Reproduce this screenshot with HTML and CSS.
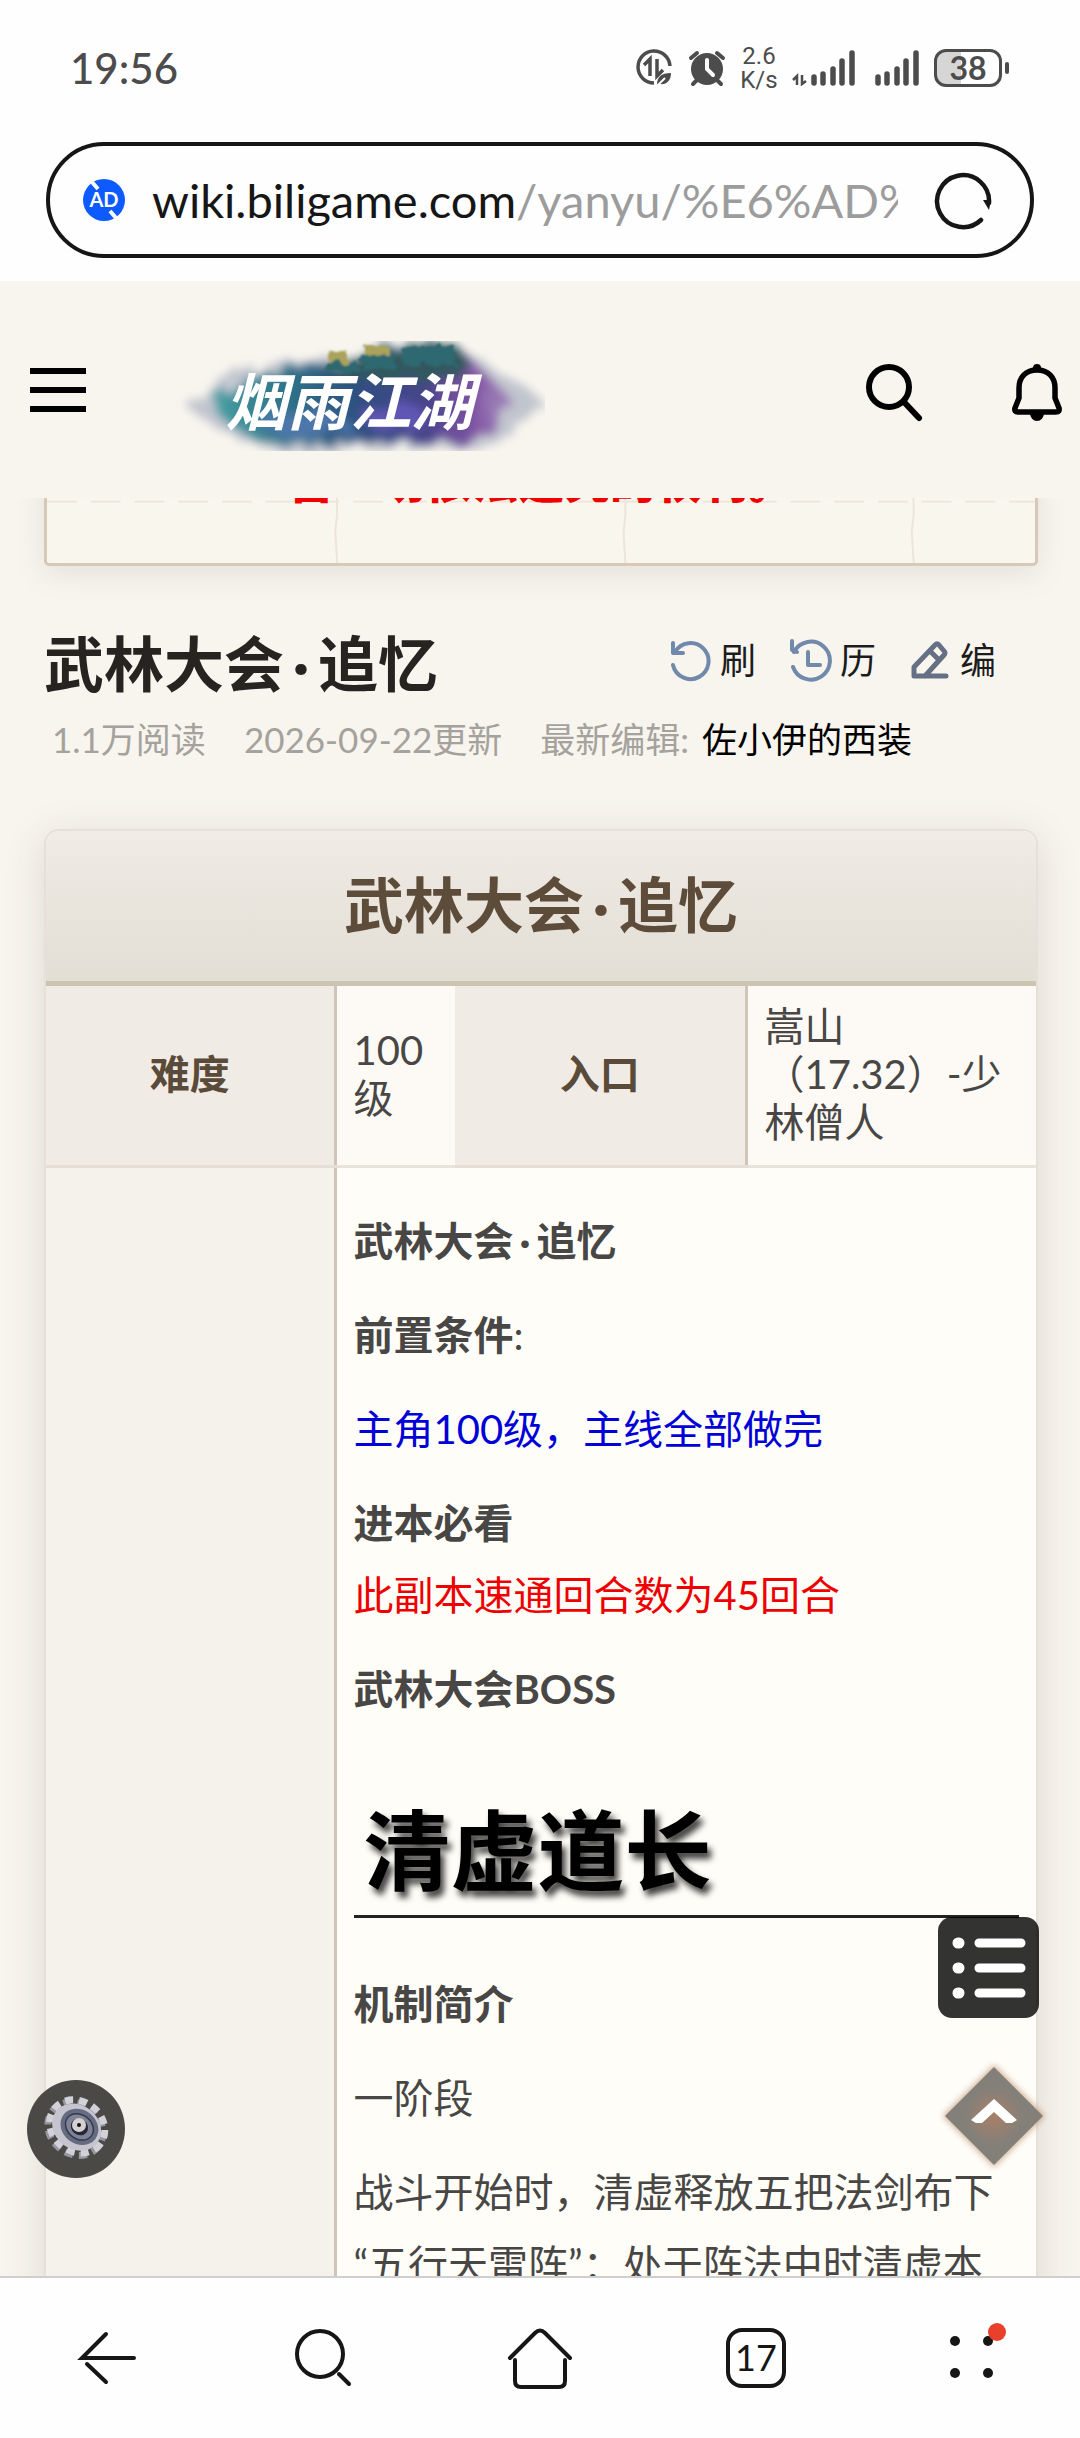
FILE: index.html
```html
<!DOCTYPE html>
<html lang="zh-CN">
<head>
<meta charset="utf-8">
<meta name="viewport" content="width=device-width, initial-scale=1">
<title>武林大会·追忆</title>
<link rel="stylesheet" href="styles.css">
</head>
<body>
<div class="status">
  <time class="clock">19:56</time>
  <div class="status-icons">
    <svg width="38" height="38" viewBox="0 0 38 38" aria-hidden="true">
      <path d="M18 34A16 16 0 1 1 34 17" fill="none" stroke="#4c4c4c" stroke-width="3.5"/>
      <path d="M8 16l6-6v17M27 21l-6 6V10" fill="none" stroke="#4c4c4c" stroke-width="3.5"/>
      <path d="M21 36c0-8 4-12 14-12 0 8-5 12-11 11z" fill="#4c4c4c"/>
      <path d="M21 37l8-8" stroke="#fff" stroke-width="2"/>
    </svg>
    <svg width="38" height="38" viewBox="0 0 38 38" aria-hidden="true">
      <circle cx="19" cy="20" r="16" fill="#4c4c4c"/>
      <path d="M3 9l6-5M35 9l-6-5M5 35l5-5M33 35l-5-5" stroke="#4c4c4c" stroke-width="4" stroke-linecap="round"/>
      <path d="M19 11v9l6 6" fill="none" stroke="#fff" stroke-width="4" stroke-linecap="round"/>
    </svg>
    <span class="speed"><span>2.6</span><span>K/s</span></span>
    <svg width="64" height="36" viewBox="0 0 64 36" aria-hidden="true">
      <path d="M1 30l4-4v9M14 31l-4 3V25" fill="none" stroke="#4c4c4c" stroke-width="2.5"/>
      <path d="M22 27v6M31 24v9M41 19v14M50 11v22M60 3v30" stroke="#4c4c4c" stroke-width="5.5" stroke-linecap="round"/>
    </svg>
    <svg width="50" height="36" viewBox="-4 0 50 36" aria-hidden="true">
      <path d="M4 27v6M13 24v9M23 19v14M32 11v22M42 3v30" stroke="#4c4c4c" stroke-width="5.5" stroke-linecap="round"/>
    </svg>
    <span class="battery">38</span>
  </div>
</div>

<div class="address">
  <svg width="44" height="44" viewBox="0 0 44 44" role="img" aria-label="AD">
    <circle cx="22" cy="22" r="21" fill="#0d5bff"/>
    <path d="M10 4l6 7M28 33l6 7" stroke="#fff" stroke-width="4"/>
    <text x="22" y="29" text-anchor="middle" class="ad-text">AD</text>
  </svg>
  <button class="url" type="button">wiki.biligame.com<span class="path">/yanyu/%E6%AD%</span></button>
  <button class="icon-btn" type="button" aria-label="刷新">
    <svg width="60" height="60" viewBox="0 0 60 60">
      <path d="M47 50A26 26 0 1 1 55 33" fill="none" stroke="#161616" stroke-width="4.5" stroke-linecap="round"/>
      <path d="M49 30h8l-2 10z" fill="#161616"/>
    </svg>
  </button>
</div>

<header class="site-head">
  <button class="icon-btn menu" type="button" aria-label="菜单"><i></i><i></i><i></i></button>
  <a class="logo" href="#">
    <svg width="370" height="110" viewBox="0 0 370 110" role="img" aria-label="烟雨江湖">
      <defs>
        <filter id="soft" x="-20%" y="-40%" width="140%" height="180%"><feTurbulence type="fractalNoise" baseFrequency=".05" numOctaves="3" seed="4"/><feDisplacementMap in="SourceGraphic" scale="26"/><feGaussianBlur stdDeviation="5"/></filter>
        <filter id="rough" x="-10%" y="-20%" width="120%" height="140%"><feTurbulence type="fractalNoise" baseFrequency=".09" numOctaves="2" seed="2"/><feDisplacementMap in="SourceGraphic" scale="12"/><feGaussianBlur stdDeviation="1"/></filter>
        <linearGradient id="ink" x1="0" x2="1" y1="0" y2="0">
          <stop offset="0" stop-color="#4aa3a6"/><stop offset=".25" stop-color="#2d7388"/><stop offset=".5" stop-color="#2f4f80"/><stop offset=".72" stop-color="#49438c"/><stop offset=".88" stop-color="#8356a4"/><stop offset="1" stop-color="#a48dbd"/>
        </linearGradient>
      </defs>
      <g filter="url(#soft)">
        <path d="M10 64Q60 22 140 20L215 8h70q40 20 80 50-20 40-60 50-140-2-200 4Q50 98 10 64z" fill="#a9b1c1" opacity=".7"/>
        <path d="M34 62Q70 28 150 26L220 4h60q24 22 56 54-14 34-50 44-130-2-190 0-40-10-62-40z" fill="url(#ink)"/>
        <ellipse cx="130" cy="84" rx="46" ry="12" fill="#4d77ab"/>
        <ellipse cx="220" cy="76" rx="32" ry="12" fill="#6157b4"/>
        <path d="M150 34q40-32 130-32l20 28q-60 20-150 4z" fill="#31585f"/>
      </g>
      <g filter="url(#rough)">
        <path d="M154 10h18v12h-18zM190 4h24v10h-24z" fill="#a9a35c"/>
        <path d="M150 22h34v8h-34zM186 14h34v14h-34zM228 4h52v20h-52z" fill="#2f6870"/>
      </g>
      <text x="50" y="84" class="logo-text">烟雨江湖</text>
    </svg>
  </a>
  <button class="icon-btn find" type="button" aria-label="搜索">
    <svg width="58" height="60" viewBox="0 0 58 60"><circle cx="23" cy="24" r="20" fill="none" stroke="#000" stroke-width="6"/><path d="M38 39l15 16" stroke="#000" stroke-width="6" stroke-linecap="round"/></svg>
  </button>
  <button class="icon-btn" type="button" aria-label="通知">
    <svg width="50" height="60" viewBox="0 0 50 60"><path d="M25 7C14 7 7 14 7 25v10L3 45q-1 4 3 4h38q4 0 3-4l-4-10V25C43 14 36 7 25 7z" fill="none" stroke="#000" stroke-width="5.5" stroke-linejoin="round"/><circle cx="25" cy="5" r="4"/><path d="M18 50h14a7 8 0 0 1-14 0z"/></svg>
  </button>
</header>

<main class="content">
  <section class="notice">
    <svg class="cracks" viewBox="0 0 994 106" preserveAspectRatio="none" aria-hidden="true">
      <path d="M0 41h994" stroke-dasharray="30 14"/>
      <path d="M291 0l1 54-2 18 2 34M581 0l1 54-2 20 2 32M871 0l1 54-2 20 2 32"/>
    </svg>
    <strong>留一切依法追究的权利。</strong>
  </section>

  <div class="title-row">
    <h1>武林大会<span class="dot">·</span>追忆</h1>
    <div class="tools">
      <button type="button">
        <svg width="42" height="44" viewBox="0 0 42 44"><path d="M3 27a18 18 0 1 0 2-13" class="line blue"/><path d="M3 5v10h10" class="line blue"/></svg>刷
      </button>
      <button type="button">
        <svg width="42" height="44" viewBox="0 0 42 44"><path d="M3 29a19 19 0 1 0 1-15" class="line blue"/><path d="M2 3v9l5 2M18 14v13h12" class="line blue"/></svg>历
      </button>
      <button type="button">
        <svg width="42" height="44" viewBox="0 0 42 44"><path d="M4 38V29L25 7q2-2 4 0l5 6q2 2 0 4L15 38M4 38h32M20 13l9 9" class="line slate"/></svg>编
      </button>
    </div>
  </div>
  <div class="meta">
    <span>1.1万阅读</span><span>2026-09-22更新</span><span>最新编辑: <a href="#">佐小伊的西装</a></span>
  </div>

  <article class="card">
    <h2>武林大会<span class="dot">·</span>追忆</h2>
    <table>
      <colgroup><col class="c1"><col class="c2"><col class="c3"><col></colgroup>
      <tr><th scope="row">难度</th><td>100级</td><th scope="row">入口</th><td>嵩山（17.32）-少林僧人</td></tr>
      <tr>
        <td class="side"></td>
        <td colspan="3" class="guide">
          <p><b>武林大会<span class="half">·</span>追忆</b></p>
          <p><b>前置条件</b>:</p>
          <p class="need">主角100级，主线全部做完</p>
          <p><b>进本必看</b><br><span class="warn">此副本速通回合数为45回合</span></p>
          <p><b>武林大会BOSS</b></p>
          <h3>清虚道长</h3>
          <p><b>机制简介</b></p>
          <p>一阶段</p>
          <p>战斗开始时，清虚释放五把法剑布下“五行天雷阵”：处于阵法中时清虚本</p>
        </td>
      </tr>
    </table>
  </article>

  <button class="float toc" type="button" aria-label="目录">
    <svg width="101" height="101" viewBox="0 0 101 101"><path d="M20 26h1M20 51h1M20 76h1" stroke="#fff" stroke-width="11" stroke-linecap="round"/><path d="M41 26h42M41 51h42M41 76h42" stroke="#fff" stroke-width="9" stroke-linecap="round"/></svg>
  </button>
  <button class="float top" type="button" aria-label="返回顶部">
    <svg width="120" height="120" viewBox="0 0 120 120">
      <defs><radialGradient id="glow"><stop offset="0" stop-color="#a87f67"/><stop offset=".6" stop-color="#83807a"/></radialGradient>
      <filter id="halo"><feGaussianBlur stdDeviation="3"/></filter></defs>
      <path d="M60 9l51 51-51 51L9 60z" fill="#c59878" filter="url(#halo)" opacity=".8"/>
      <path d="M60 11l49 49-49 49-49-49z" fill="url(#glow)"/>
      <path d="M60 43l23 21-5 3H72L60 56 48 67h-6l-5-3z" fill="#fff"/>
    </svg>
  </button>
  <button class="float gear" type="button" aria-label="设置">
    <svg width="98" height="98" viewBox="0 0 98 98">
      <circle cx="49" cy="49" r="49" fill="#4a4945"/>
      <g transform="rotate(38 49 48)">
        <ellipse cx="49" cy="49" rx="29" ry="25" fill="none" stroke="#9796a0" stroke-width="7" stroke-dasharray="8 6"/>
        <ellipse cx="49" cy="46" rx="29" ry="25" fill="none" stroke="#d2d0d8" stroke-width="7" stroke-dasharray="8 6"/>
        <ellipse cx="49" cy="47" rx="26" ry="22" fill="#c6c4cf"/>
        <ellipse cx="51" cy="45" rx="20" ry="17" fill="#656b80"/>
        <ellipse cx="51" cy="45" rx="15" ry="12" fill="#7e8398" stroke="#353a4c" stroke-width="1.5"/>
        <ellipse cx="51" cy="45" rx="9" ry="8" fill="#25283a"/>
      </g>
      <circle cx="52" cy="45" r="7" fill="#d6d1d0"/><circle cx="52" cy="45" r="2" fill="#111"/>
    </svg>
  </button>
</main>

<nav class="bottom">
  <button type="button" aria-label="后退"><svg width="64" height="64" viewBox="0 0 64 64"><path d="M30 8L6 32h52M11 38l19 18"/></svg></button>
  <button type="button" aria-label="搜索"><svg width="64" height="64" viewBox="0 0 64 64"><circle cx="28" cy="28" r="23"/><path d="M47 48l10 10"/></svg></button>
  <button type="button" aria-label="主页"><svg width="64" height="64" viewBox="0 0 64 64"><path d="M2 32L27 7q5-5 10 0l25 25M7 34v21q0 6 6 6h38q6 0 6-6V34"/></svg></button>
  <button type="button" aria-label="标签页"><span class="tabs">17</span></button>
  <button type="button" aria-label="更多"><svg width="64" height="64" viewBox="0 0 64 64"><g class="solid"><circle cx="15" cy="15" r="5"/><circle cx="48" cy="15" r="5"/><circle cx="15" cy="47" r="5"/><circle cx="48" cy="47" r="5"/></g><circle cx="57" cy="6" r="9" class="badge"/></svg></button>
</nav>
</body>
</html>
```
FILE: styles.css
```css
* { box-sizing: border-box; }

body {
  margin: 0;
  height: 100vh;
  display: flex;
  flex-direction: column;
  overflow: hidden;
  background: #fefefe;
  color: #484745;
  font-family: Lato, "Noto Sans CJK SC", sans-serif;
  font-size: 40px;
}

button {
  border: 0;
  padding: 0;
  background: none;
  color: inherit;
  font: inherit;
}

svg { display: block; flex: none; }
a { color: #000; text-decoration: none; }

/* phone status bar */
.status {
  flex: none;
  display: flex;
  align-items: center;
  justify-content: space-between;
  height: 136px;
  padding: 0 78px 0 70px;
  color: #4c4c4c;
}
.clock { font-size: 42px; font-weight: 500; }
.status-icons { display: flex; align-items: center; gap: 14px; }
.speed {
  display: grid;
  width: 38px;
  font: 24px/24px Roboto, sans-serif;
  text-align: center;
}
.battery {
  position: relative;
  width: 68px;
  height: 38px;
  border: 3px solid #4c4c4c;
  border-radius: 12px;
  background: linear-gradient(90deg, #d6d6d6 38%, #fff 38%);
  font-size: 32px;
  font-weight: 700;
  line-height: 32px;
  text-align: center;
}
.battery::after {
  content: "";
  position: absolute;
  right: -10px;
  top: 10px;
  width: 4px;
  height: 12px;
  border-radius: 2px;
  background: #4c4c4c;
}

/* browser address bar */
.address {
  flex: none;
  display: flex;
  align-items: center;
  height: 116px;
  margin: 6px 46px 23px;
  padding: 0 36px 0 32px;
  border: 4px solid #161616;
  border-radius: 58px;
  color: #161616;
}
.ad-text { fill: #fff; font-size: 20px; font-weight: 700; }
.url {
  flex: 1;
  min-width: 0;
  margin: 0 36px 0 26px;
  overflow: hidden;
  font-size: 47px;
  line-height: 64px;
  text-align: left;
  white-space: nowrap;
}
.path { color: #9c9c9c; }

/* site header */
.site-head {
  flex: none;
  position: relative;
  z-index: 2;
  display: flex;
  align-items: center;
  height: 217px;
  padding: 6px 18px 0 30px;
  background: #f8f5ee;
}
.menu { display: grid; gap: 13px; padding-bottom: 6px; }
.menu i { width: 56px; height: 6px; background: #000; }
.logo { margin: 6px auto 0 89px; }
.logo-text { fill: #fff; font-size: 62px; font-weight: 700; font-style: italic; }
.find { margin-right: 88px; }

/* scrolling page */
.content {
  flex: 1;
  min-height: 0;
  position: relative;
  overflow: hidden;
  padding: 0 42px 0 44px;
  background: #f8f5ee;
}
.notice {
  position: relative;
  height: 106px;
  margin-top: -38px;
  border: 3px solid #d8c9b6;
  border-radius: 5px;
  background: #f9f6ee;
  box-shadow: 0 8px 30px rgba(90, 100, 90, .13);
  color: #f00000;
  font-size: 46px;
  font-weight: 900;
  line-height: 36px;
  text-align: center;
}
.notice strong { font-weight: 900; }
.cracks {
  position: absolute;
  inset: 0;
  width: 100%;
  height: 100%;
  fill: none;
  stroke: #ebe5da;
  stroke-width: 2;
}
.notice strong { position: relative; }

.title-row {
  display: flex;
  align-items: center;
  justify-content: space-between;
  height: 80px;
  margin-top: 58px;
  padding-right: 42px;
}
h1 { margin: 0; color: #262321; font-size: 60px; line-height: 80px; }
.dot, .half { display: inline-block; width: 34px; text-align: center; }
.half { width: 23px; }
.tools { display: flex; gap: 34px; padding-bottom: 8px; color: #1c1c1c; font-size: 36px; line-height: 44px; }
.tools button { display: flex; align-items: center; gap: 8px; }
.line { fill: none; stroke-width: 4; stroke-linecap: round; stroke-linejoin: round; }
.blue { stroke: #7189ab; }
.slate { stroke: #667084; stroke-width: 5; }

.meta {
  display: flex;
  gap: 38px;
  padding-left: 8px;
  margin-top: 9px;
  color: #a5a29d;
  font-size: 35px;
  line-height: 52px;
}
.meta a { margin-left: 4px; }

/* dungeon card */
.card {
  margin-top: 64px;
  border: 2px solid #e6e1d8;
  border-radius: 15px;
  overflow: hidden;
  background: #fefdf8;
  box-shadow: 0 8px 40px rgba(70, 60, 50, .15);
}
h2 {
  margin: 0;
  height: 155px;
  border-bottom: 5px solid #cdc3b3;
  background: linear-gradient(#f0ece6, #e9e4dc 50%, #e2dfd5);
  color: #5e4c3a;
  font-size: 60px;
  line-height: 148px;
  text-align: center;
}
table { width: 100%; table-layout: fixed; border-collapse: collapse; line-height: 48px; }
.c1 { width: 289px; }
.c2 { width: 120px; }
.c3 { width: 291px; }
th {
  height: 180px;
  padding: 0 0 3px;
  border-right: 3px solid #cfc5b8;
  border-bottom: 3px solid #e6dfd5;
  background: #f0ebe4;
  color: #594a39;
}
td {
  padding: 0 17px 3px;
  border-bottom: 3px solid #e9e3da;
  background: #fdfaf5;
}
.side { border-right: 3px solid #cfc5b8; background: #f5f2ec; }
.guide { padding-top: 37px; background: #fefdf8; line-height: 72px; vertical-align: top; }
p { margin: 0 0 22px; }
.need { color: #0000d8; }
.warn { color: #ee0000; }
h3 {
  margin: 0 0 50px;
  padding: 46px 10px 6px;
  border-bottom: 3px solid #222;
  color: #000;
  font-size: 87px;
  line-height: 116px;
  text-shadow: 4px 6px 6px rgba(0, 0, 0, .75);
}

/* floating controls */
.float { position: absolute; }
.toc { right: 41px; bottom: 258px; border-radius: 14px; background: rgba(0, 0, 0, .8); }
.top { right: 26px; bottom: 100px; }
.gear { left: 27px; bottom: 98px; }

/* browser toolbar */
.bottom {
  flex: none;
  display: grid;
  grid-template-columns: repeat(5, 1fr);
  height: 162px;
  border-top: 2px solid #cfcfcf;
  background: #fefefe;
}
.bottom button { display: grid; place-items: center; }
.bottom svg { fill: none; stroke: #161616; stroke-width: 4; stroke-linecap: round; overflow: visible; }
.bottom .solid { fill: #161616; stroke: none; }
.bottom .badge { fill: #e8402a; stroke: none; }
.tabs {
  width: 60px;
  height: 60px;
  border: 4px solid #161616;
  border-radius: 16px;
  color: #161616;
  font-size: 36px;
  line-height: 50px;
  text-align: center;
}
```
